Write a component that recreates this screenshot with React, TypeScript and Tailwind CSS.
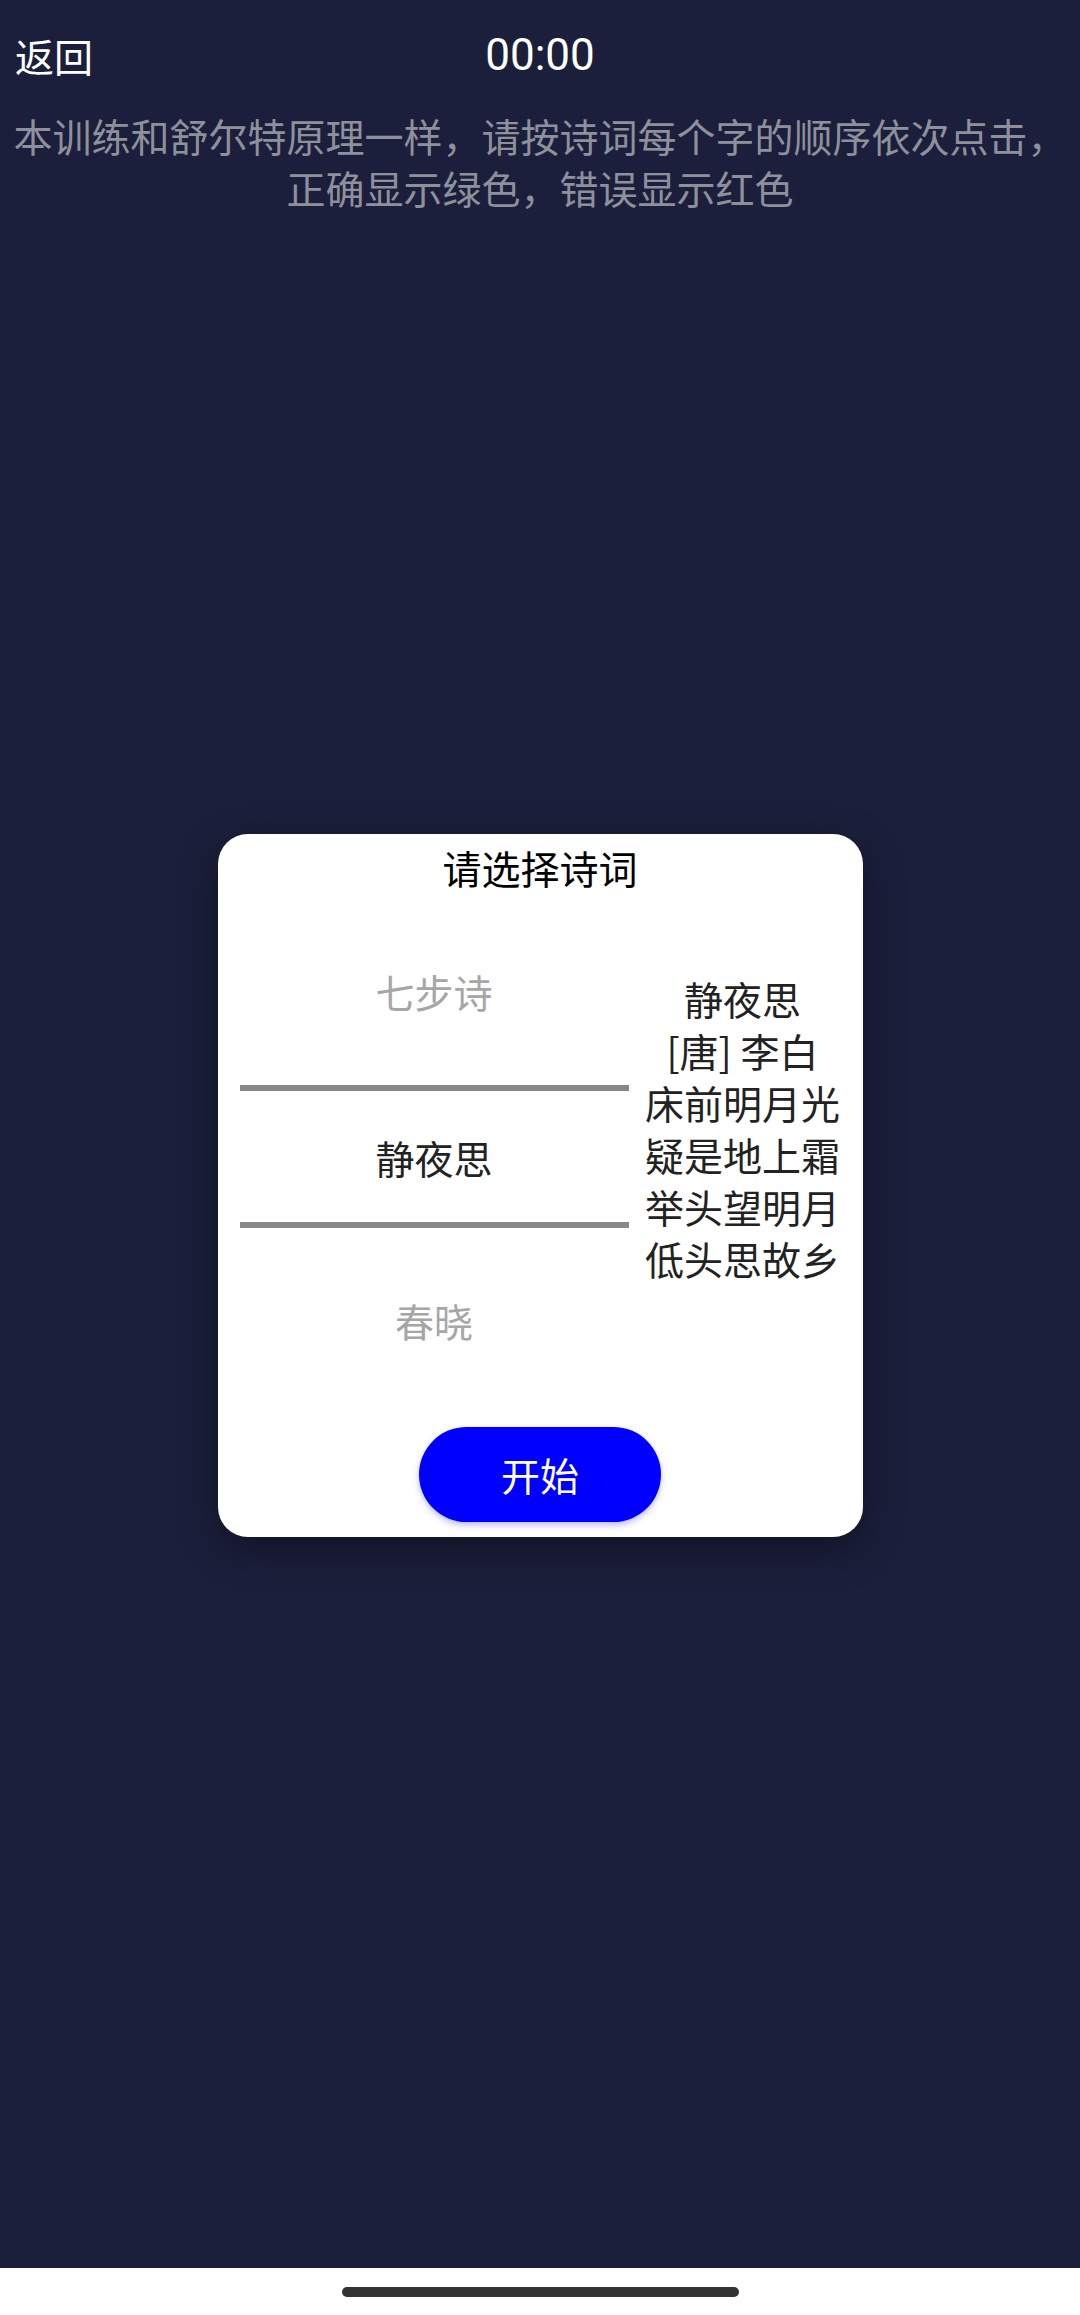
const cjk = { fontFamily: '"Noto Sans CJK SC", "Noto Sans", sans-serif' };
const digits = { fontFamily: 'Roboto, "Noto Sans CJK SC", sans-serif' };

const poemLines = ['静夜思', '[唐] 李白', '床前明月光', '疑是地上霜', '举头望明月', '低头思故乡'];

function Picker() {
  return (
    <div className="w-[389px] flex flex-col items-stretch text-[39px] text-center">
      <div className="mt-[78px] h-[46px] leading-[46px] text-[#a6a6a6]">七步诗</div>
      <div className="mt-[71px] h-[6px] bg-[#888888]"></div>
      <div className="mt-[43px] h-[46px] leading-[46px] text-[#222222]">静夜思</div>
      <div className="mt-[42px] h-[6px] bg-[#888888]"></div>
      <div className="mt-[69px] h-[46px] leading-[46px] text-[#a6a6a6]">春晓</div>
    </div>
  );
}

export default function App() {
  return (
    <div className="w-[1080px] h-[2315px] flex flex-col bg-[#1b1f3b]" style={cjk}>
      <div className="flex-1 flex flex-col">
        {/* Header */}
        <div className="h-[109px] grid grid-cols-[1fr_auto_1fr] items-center px-[15px]">
          <span className="text-white text-[39px] leading-[46px]">返回</span>
          <span className="text-white text-[44px] leading-[50px]" style={digits}>
            00:00
          </span>
          <span></span>
        </div>

        <div className="text-center text-[39px] leading-[52px] text-[#8e919c]">
          <p>本训练和舒尔特原理一样，请按诗词每个字的顺序依次点击，</p>
          <p>正确显示绿色，错误显示红色</p>
        </div>

        {/* Dialog */}
        <div className="mt-[621px] mx-auto w-[645px] h-[703px] rounded-[30px] bg-white shadow-[0_12px_40px_rgba(0,0,0,0.4)] flex flex-col">
          <h2 className="pt-[10px] h-[56px] text-center text-[39px] leading-[46px] text-black font-normal">
            请选择诗词
          </h2>
          <div className="flex pl-[22px]">
            <Picker />
            <div className="w-[212px] ml-[8px] pt-[82px] text-center text-[39px] leading-[52px] text-[#222222]">
              {poemLines.map((l) => (
                <div key={l}>{l}</div>
              ))}
            </div>
          </div>
          <div className="mt-[84px] flex justify-center">
            <button className="w-[242px] h-[95px] rounded-full bg-[#0000ff] text-white text-[39px] shadow-[0_3px_6px_rgba(60,60,255,0.35)]">
              开始
            </button>
          </div>
        </div>
      </div>

      {/* Home indicator */}
      <div className="h-[47px] bg-white flex items-center justify-center">
        <div className="w-[397px] h-[10px] rounded-full bg-[#333333]"></div>
      </div>
    </div>
  );
}
